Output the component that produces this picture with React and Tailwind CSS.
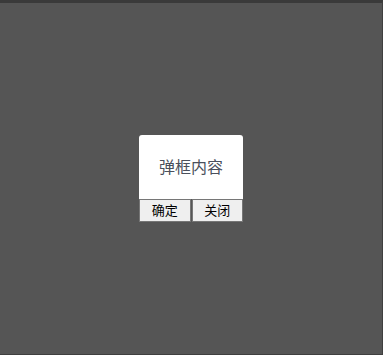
export default function App() {
  return (
    <div className="relative w-[383px] h-[355px] bg-[#555555] border-t-[3px] border-t-[#3a3a3a] border-r border-r-[#3f3f3f] border-b border-b-[#3f3f3f] flex items-center justify-center font-['Noto_Sans','Noto_Sans_CJK_SC',sans-serif]">
      <div className="flex flex-col w-[104px] mt-0">
        <div className="bg-white rounded-t-[3px] h-[64px] flex items-center justify-center text-[16px] text-[#4a505c]">
          弹框内容
        </div>
        <div className="flex gap-[1px]">
          <button className="flex-1 h-[23px] bg-[#efefef] border border-[#767676] text-[13px] text-black leading-none">
            确定
          </button>
          <button className="flex-1 h-[23px] bg-[#efefef] border border-[#767676] text-[13px] text-black leading-none">
            关闭
          </button>
        </div>
      </div>
    </div>
  );
}
